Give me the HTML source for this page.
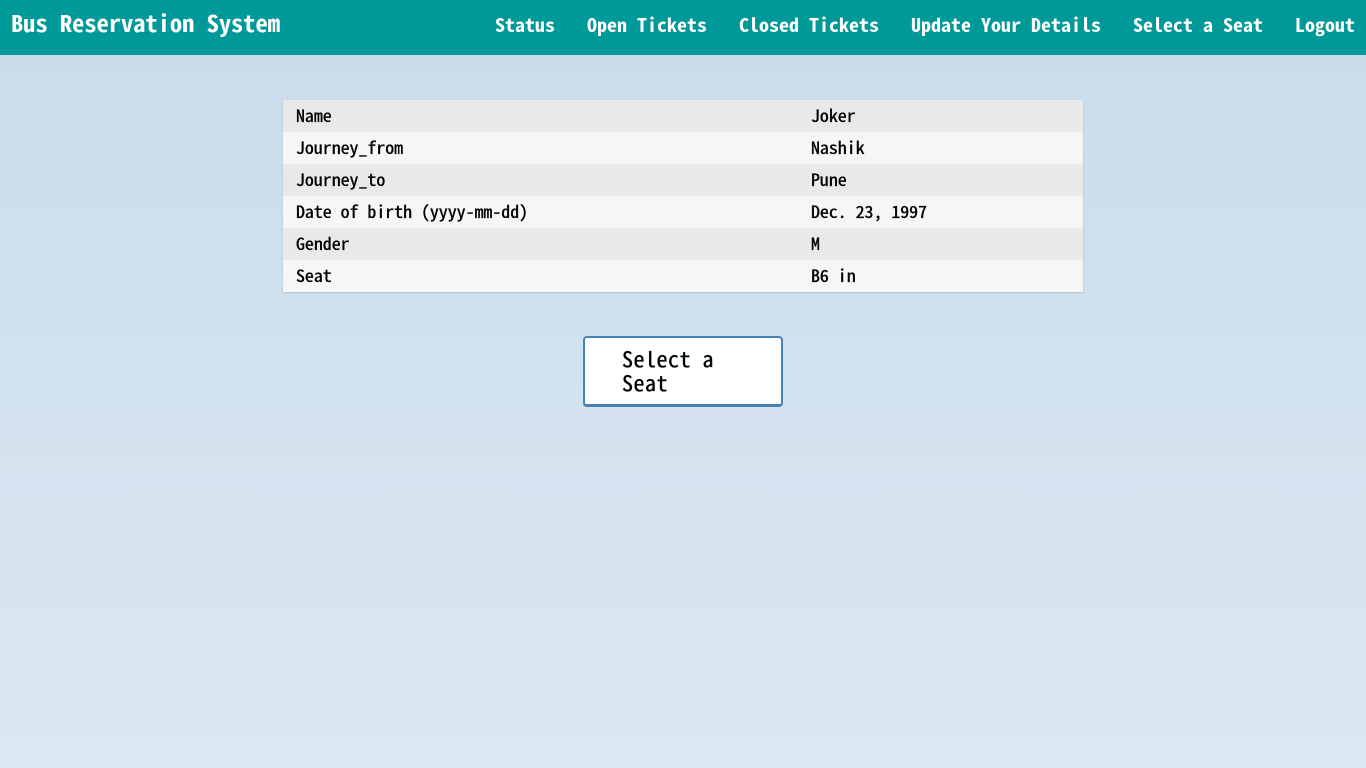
<!DOCTYPE html>
<html>
<head>
<meta charset="utf-8">
<style>
html,body{margin:0;padding:0;width:1366px;height:768px;overflow:hidden}
body{background:linear-gradient(to bottom,#c9dbeb 0%,#dbe8f1 100%);font-family:"Noto Sans Mono CJK JP","Noto Sans Mono CJK SC","Liberation Mono",monospace;color:#000;position:relative}
.t{position:absolute;white-space:pre;transform-origin:0 50%}
#bar{position:absolute;left:0;top:0;width:1366px;height:55px;background:#009999}
.brand{font-size:23px;font-weight:bold;color:#fff;line-height:28px;top:8px;left:11px;transform:scaleX(1.063)}
.nav{font-size:19px;font-weight:bold;color:#fff;line-height:26px;top:12px;transform:scaleX(1.0526)}
#tb{position:absolute;left:283px;top:100px;width:800px;height:192px;box-shadow:0 1px 2px rgba(0,0,0,.16)}
.r{position:absolute;left:0;width:800px;height:32px}
.c{font-size:17px;font-weight:400;-webkit-text-stroke:.35px #000;line-height:32px;top:-1px;transform:scaleX(1.05)}
.a{left:13.4px}.b{left:528.4px}
#btn{position:absolute;left:583px;top:336px;width:196px;height:66px;background:#fff;border:2px solid #4682b4;border-bottom-width:3px;border-radius:4px}
.bt{font-size:21px;font-weight:400;-webkit-text-stroke:.35px #000;line-height:24px;left:37px;letter-spacing:.5px;transform:scaleX(1.045)}
</style>
</head>
<body>
<div id="bar">
<div class="t brand">Bus Reservation System</div>
<div class="t nav" style="left:495px">Status</div>
<div class="t nav" style="left:587px">Open Tickets</div>
<div class="t nav" style="left:739px">Closed Tickets</div>
<div class="t nav" style="left:911px">Update Your Details</div>
<div class="t nav" style="left:1133px">Select a Seat</div>
<div class="t nav" style="left:1295px">Logout</div>
</div>
<div id="tb">
<div class="r" style="top:0;background:#e9e9e9"><div class="t c a">Name</div><div class="t c b">Joker</div></div>
<div class="r" style="top:32px;background:#f6f6f6"><div class="t c a">Journey_from</div><div class="t c b">Nashik</div></div>
<div class="r" style="top:64px;background:#e9e9e9"><div class="t c a">Journey_to</div><div class="t c b">Pune</div></div>
<div class="r" style="top:96px;background:#f6f6f6"><div class="t c a">Date of birth (yyyy-mm-dd)</div><div class="t c b">Dec. 23, 1997</div></div>
<div class="r" style="top:128px;background:#e9e9e9"><div class="t c a">Gender</div><div class="t c b">M</div></div>
<div class="r" style="top:160px;background:#f6f6f6"><div class="t c a">Seat</div><div class="t c b">B6 in</div></div>
</div>
<div id="btn">
<div class="t bt" style="top:9px">Select a</div>
<div class="t bt" style="top:33px">Seat</div>
</div>
</body>
</html>
